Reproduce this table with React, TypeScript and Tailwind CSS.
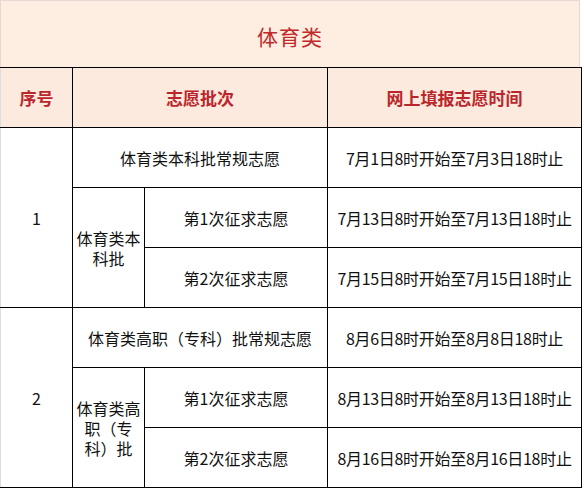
export default function App() {
  const font = { fontFamily: '"Noto Sans CJK SC", "Noto Sans", sans-serif' };

  const cell = 'border border-black text-center align-middle h-[60px] p-0';
  const time = `${cell} tracking-[-0.3px]`;

  return (
    <div className="w-[584px] h-[488px] bg-white text-[#111]" style={font}>
      {/* 标题 */}
      <div className="w-[580px] h-[67px] pt-[5px] bg-[#fdeee1] border-l border-t border-r border-[#ead6d2] flex items-center justify-center text-[21px] text-[#c0282a] tracking-[1px]">
        体育类
      </div>

      <table className="w-[581px] table-fixed border-collapse text-[16px] leading-[20px]">
        <colgroup>
          <col className="w-[72px]" />
          <col className="w-[72px]" />
          <col className="w-[183px]" />
          <col className="w-[254px]" />
        </colgroup>
        <tbody>
          {/* 表头 */}
          <tr className="bg-[#fdeade] text-[#ba262b] font-bold text-[17px]">
            <td className={`${cell} border-l-[#dddddd]`}>序号</td>
            <td className={cell} colSpan={2}>志愿批次</td>
            <td className={cell}>网上填报志愿时间</td>
          </tr>

          {/* 本科批 */}
          <tr>
            <td className={`${cell} border-l-[#dddddd]`} rowSpan={3}>1</td>
            <td className={cell} colSpan={2}>体育类本科批常规志愿</td>
            <td className={time}>7月1日8时开始至7月3日18时止</td>
          </tr>
          <tr>
            <td className={`${cell} px-[2px]`} rowSpan={2}>
              体育类本<br />科批
            </td>
            <td className={cell}>第1次征求志愿</td>
            <td className={time}>7月13日8时开始至7月13日18时止</td>
          </tr>
          <tr>
            <td className={cell}>第2次征求志愿</td>
            <td className={time}>7月15日8时开始至7月15日18时止</td>
          </tr>

          {/* 高职（专科）批 */}
          <tr>
            <td className={`${cell} border-l-[#dddddd]`} rowSpan={3}>2</td>
            <td className={cell} colSpan={2}>体育类高职（专科）批常规志愿</td>
            <td className={time}>8月6日8时开始至8月8日18时止</td>
          </tr>
          <tr>
            <td className={`${cell} px-[2px]`} rowSpan={2}>
              体育类高<br />职（专<br />科）批
            </td>
            <td className={cell}>第1次征求志愿</td>
            <td className={time}>8月13日8时开始至8月13日18时止</td>
          </tr>
          <tr>
            <td className={cell}>第2次征求志愿</td>
            <td className={time}>8月16日8时开始至8月16日18时止</td>
          </tr>
        </tbody>
      </table>
    </div>
  );
}
